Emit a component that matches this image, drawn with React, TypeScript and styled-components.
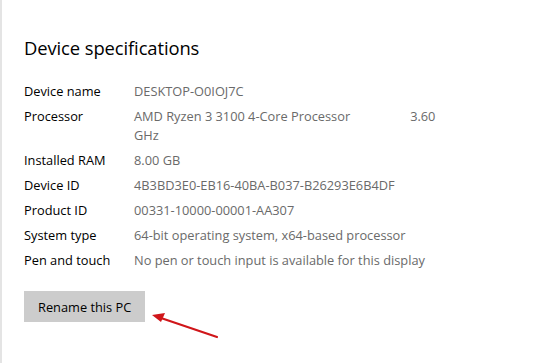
import React, { FC } from 'react'
import styled, { createGlobalStyle } from 'styled-components'

const GlobalStyle = createGlobalStyle`
  html, body {
    margin: 0;
    padding: 0;
    background: #ffffff;
  }
  body {
    font-family: 'Open Sans', 'Noto Sans', sans-serif;
  }
`

const Page = styled.div`
  width: 545px;
  height: 363px;
  box-sizing: border-box;
  border-left: 2px solid #e4e4e4;
  padding: 35px 0 0 22px;
  overflow: hidden;
`

const Heading = styled.h2`
  margin: 0 0 21px;
  font-size: 18.4px;
  font-weight: 400;
  line-height: 26px;
  color: #000;
  letter-spacing: -0.1px;
`

const SpecList = styled.dl`
  margin: 0;
  display: grid;
  grid-template-columns: 110px 320px;
  row-gap: 6px;
  font-size: 12.8px;
  line-height: 19px;
`

const Label = styled.dt`
  margin: 0;
  color: #000;
`

const Value = styled.dd`
  margin: 0;
  color: #6a6a6a;
`

const ValueLine = styled.div`
  display: flex;
`

const Tab = styled.span<{ $width: number }>`
  display: inline-block;
  width: ${({ $width }) => $width}px;
`

const Actions = styled.div`
  position: relative;
  margin-top: 21px;
`

const RenameButton = styled.button`
  height: 31px;
  padding: 0 14px;
  border: none;
  background: #cccccc;
  color: #000;
  font-family: inherit;
  font-size: 12.8px;
`

const Arrow = styled.svg`
  position: absolute;
  left: 125px;
  top: 19px;
`

type Spec = { label: string; value: string }

const specs: Spec[] = [
  { label: 'Installed RAM', value: '8.00 GB' },
  { label: 'Device ID', value: '4B3BD3E0-EB16-40BA-B037-B26293E6B4DF' },
  { label: 'Product ID', value: '00331-10000-00001-AA307' },
  { label: 'System type', value: '64-bit operating system, x64-based processor' },
  { label: 'Pen and touch', value: 'No pen or touch input is available for this display' },
]

const App: FC = () => (
  <>
    <GlobalStyle />
    <Page>
      <Heading>Device specifications</Heading>
      <SpecList>
        <Label>Device name</Label>
        <Value>DESKTOP-O0IOJ7C</Value>
        <Label>Processor</Label>
        <Value>
          <ValueLine>
            AMD Ryzen 3 3100 4-Core Processor
            <Tab $width={60} />
            3.60
          </ValueLine>
          <ValueLine>GHz</ValueLine>
        </Value>
        {specs.map((s) => (
          <React.Fragment key={s.label}>
            <Label>{s.label}</Label>
            <Value>{s.value}</Value>
          </React.Fragment>
        ))}
      </SpecList>
      <Actions>
        <RenameButton>Rename this PC</RenameButton>
        <Arrow width="72" height="34" viewBox="0 0 72 34">
          <line x1="9" y1="7" x2="68" y2="27" stroke="#d0161a" strokeWidth="2.2" strokeLinecap="round" />
          <polygon points="3,5 16,3 12,12" fill="#d0161a" />
        </Arrow>
      </Actions>
    </Page>
  </>
)

export default App
